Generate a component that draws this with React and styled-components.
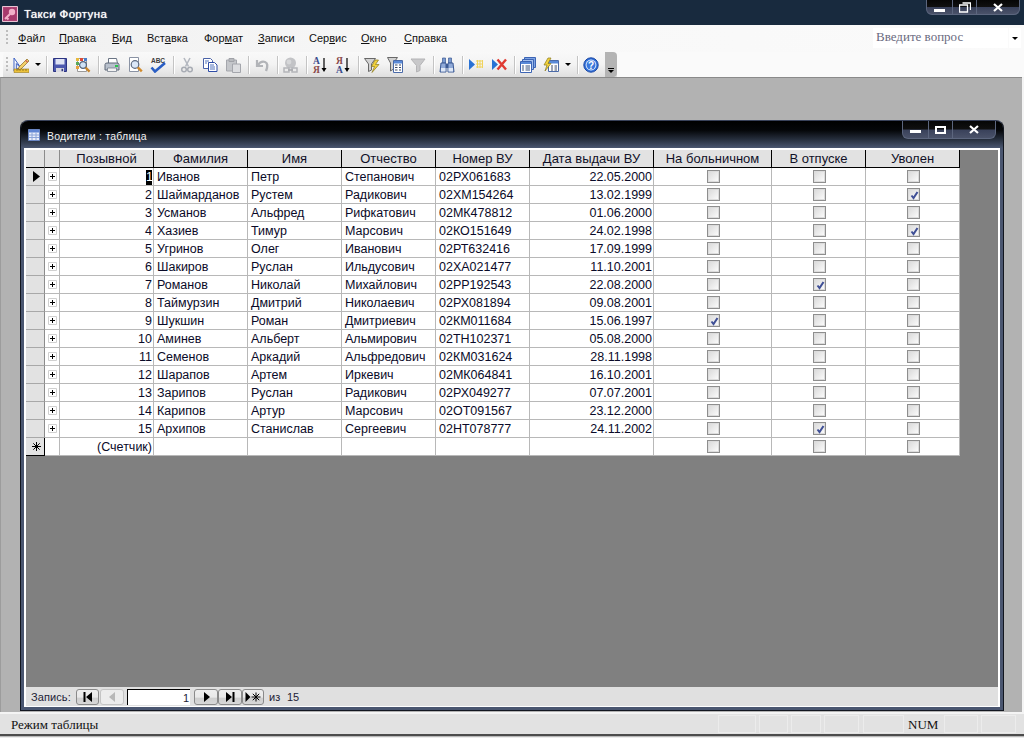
import React from "react";
import styled, { createGlobalStyle } from "styled-components";

const Global = createGlobalStyle`
  html, body { margin: 0; padding: 0; background: #b2b2b2; overflow: hidden; }
  * { box-sizing: border-box; }
  #root { width: 1024px; height: 738px; }
`;
const sans = `"Liberation Sans", Arial, sans-serif`;
const serif = `"Liberation Serif", "Times New Roman", serif`;

const Page = styled.div`
  width: 1024px; height: 738px; display: flex; flex-direction: column;
  font-family: ${sans}; color: #000; background: #f4f4f4;
`;
const TitleBar = styled.header`
  height: 25px; flex: none; background: #182a3e; display: flex; align-items: flex-start;
  padding: 0 4px 0 2px;
`;
const AppIcon = styled.svg`width: 16px; height: 16px; margin-top: 6px; flex: none;`;
const AppTitle = styled.div`
  margin: 7px 0 0 6px; color: #fff; font-size: 11.5px; line-height: 15px; font-weight: 400;
  letter-spacing: .35px; text-shadow: 0 0 1px #fff;
`;
const Controls = styled.div`
  margin-left: auto; display: flex; height: ${p => p.$h}px; margin-right: ${p => p.$mr}px;
  border: 1px solid #5c667e; border-top: 0; border-radius: 0 0 6px 6px; overflow: hidden;
  background: linear-gradient(#060606 0, #101010 48%, #39415a 52%, #4a5269 100%);
`;
const Ctl = styled.div`
  width: ${p => p.$w}px; display: flex; align-items: center; justify-content: center;
  & + & { border-left: 1px solid #5c667e; }
  svg { display: block; margin-top: ${p => p.$dy || 0}px; }
`;
const MenuBar = styled.nav`
  height: 27px; flex: none; display: flex; align-items: center; padding: 0 0 2px 18px; position: relative;
  background: linear-gradient(90deg, #f0f0f0 0, #f8f8f8 45%, #fafafa 100%);
`;
const Grip = styled.i`
  position: absolute; left: 6px; top: ${p => p.$t}px; width: 2px; height: 15px;
  background: repeating-linear-gradient(#bdbdbd 0 2px, transparent 2px 4px);
`;
const MenuItem = styled.span`
  width: ${p => p.$w}px; flex: none; font-size: 11px; line-height: 14px; color: #111;
  u { text-underline-offset: 1px; }
`;
const AskBox = styled.div`
  position: absolute; left: 873px; top: 3px; width: 135px; height: 20px; background: #fff;
  font: 13px/17px ${serif}; color: #6a6a80; padding-left: 3px;
`;
const AskArrow = styled.div`
  position: absolute; left: 1009px; top: 3px; width: 12px; height: 20px; background: #fff;
  display: flex; align-items: center; justify-content: center;
  &::after { content: ""; border: 3px solid transparent; border-top: 3px solid #000; margin-top: 3px; }
`;
const ToolRow = styled.div`
  height: 25px; flex: none; display: flex; background: #fafafa; padding-left: 3px;
`;
const ToolBar = styled.div`
  position: relative; width: 614px; display: flex; align-items: center; padding-left: 7px;
  border-radius: 4px 4px 0 0; background: linear-gradient(#f9f9f9, #f3f3f3 50%, #dfdfdf);
`;
const ToolBtn = styled.div`
  width: 23px; height: 22px; flex: none; padding-left: 3px; display: flex; align-items: center;
  svg { width: 16px; height: 16px; display: block; }
`;
const ToolArrow = styled.div`
  width: ${p => p.$w}px; flex: none; padding-left: 2px; display: flex; align-items: center;
  &::after { content: ""; border: 3px solid transparent; border-top: 3px solid #000; margin-top: 3px; }
`;
const ToolSep = styled.div`
  width: 6px; height: 18px; flex: none; position: relative;
  &::after { content: ""; position: absolute; left: 3px; top: 0; bottom: 0; width: 1px; background: #c4c4c4; box-shadow: 1px 0 #fff; }
`;
const Chevron = styled.div`
  position: absolute; right: 0; top: 0; bottom: 0; width: 12px; background: #b4b4b4; border-radius: 0 4px 4px 0;
  display: flex; flex-direction: column; align-items: center; justify-content: flex-end; padding-bottom: 4px;
  &::before { content: ""; width: 6px; height: 1px; background: #000; margin-bottom: 1px; }
  &::after { content: ""; border: 3px solid transparent; border-top: 3px solid #000; height: 0; margin-bottom: -3px; }
`;
const Workspace = styled.main`
  flex: 1; min-height: 0; background: #b2b2b2; margin-right: 2px;
  border-top: 1px solid #8a8a8a; border-left: 1px solid #9c9c9c;
  padding: 42px 0 0 19px;
`;
const DocWindow = styled.section`
  width: 984px; height: 591px; display: flex; flex-direction: column;
  background: #4a5670; border: 1px solid #12161f; border-top-color: #39425a; padding: 0 3px 3px;
  border-radius: 8px 8px 0 0;
`;
const DocTitle = styled.div`
  height: 27px; flex: none; display: flex; align-items: flex-start; margin: 0 -3px; padding: 0 7px;
  border-radius: 7px 7px 0 0; background: linear-gradient(#000 0, #05070a 35%, #2a3343 72%, #4a5670 100%);
`;
const DocIcon = styled.svg`width: 12px; height: 12px; margin: 8px 0 0 0; flex: none;`;
const DocName = styled.div`
  margin: 9px 0 0 7px; font-size: 10.5px; line-height: 13px; color: #f2f2f2; letter-spacing: .25px;
`;
const DocBody = styled.div`
  flex: 1; min-height: 0; display: flex; flex-direction: column; background: #808080;
  border: 2px solid #fff; border-bottom-width: 1px;
`;
const GridArea = styled.div`flex: 1; min-height: 0;`;
const cols = "19px 15px 94px 94px 94px 94px 94px 124px 118px 94px 94px";
const Row = styled.div`
  display: grid; grid-template-columns: ${cols}; width: 934px; height: 18px;
  background: #fff; font-size: 12.5px; line-height: 18px; color: #0a0a28;
`;
const HeadCell = styled.div`
  background: #e2e2e2; text-align: center; border-right: 1px solid #000; border-bottom: 1px solid #000;
  color: #111128; white-space: nowrap; overflow: hidden; font-size: 13px; line-height: 17px;
`;
const CornerCell = styled(HeadCell)`border-right-color: #8c8c8c;`;
const Selector = styled.div`
  background: #e2e2e2; border-right: 1px solid ${p => p.$dark ? "#000" : "#8c8c8c"};
  border-bottom: 1px solid ${p => p.$dark ? "#000" : "#a8a8a8"};
  display: flex; align-items: center; justify-content: center; padding-left: 3px;
  svg { display: block; }
`;
const Expander = styled.div`
  border-right: 1px solid #b8b8b8; border-bottom: 1px solid #b8b8b8;
  display: flex; align-items: center; padding-left: 3px;
  svg { display: block; }
`;
const Cell = styled.div`
  border-right: 1px solid #b8b8b8; border-bottom: 1px solid #b8b8b8;
  white-space: nowrap; overflow: hidden;
  text-align: ${p => p.$right ? "right" : "left"}; padding: ${p => p.$right ? "0 1px 0 0" : "0 0 0 3px"};
`;
const Current = styled.span`
  display: inline-block; background: #000; color: #fff; height: 15px; line-height: 15px;
  vertical-align: top; margin-top: 2px; width: 6px; text-align: center;
`;
const CheckCell = styled.div`
  border-right: 1px solid #b8b8b8; border-bottom: 1px solid #b8b8b8;
  display: flex; align-items: center; justify-content: center; padding-left: 2px;
`;
const Box = styled.div`
  width: 13px; height: 13px; border: 1px solid #8e8e8e;
  background: linear-gradient(135deg, #d8d8d8, #f2f2f2 70%, #fff);
  box-shadow: inset 0 0 0 1px #dcdcdc; position: relative;
  svg { position: absolute; left: 1px; top: 1px; display: block; }
`;
const NavBar = styled.div`
  height: 19px; flex: none; background: #e0e0e0; display: flex; align-items: center;
  font-size: 11px; color: #222236; padding-left: 5px;
`;
const NavLabel = styled.span`
  width: ${p => p.$w}px; flex: none; line-height: 14px; letter-spacing: ${p => p.$ls || 0}px;
`;
const NavBtn = styled.div`
  width: ${p => p.$w || 23}px; height: 16px; flex: none; margin-right: ${p => p.$mr || 0}px; border-radius: 3px;
  border: 1px solid ${p => p.$off ? "#c4c4c4" : "#8a8a8a"};
  background: ${p => p.$off ? "#ececec" : "linear-gradient(#eeeeee 0, #e9e9e9 50%, #cfcfcf 60%, #d8d8d8 100%)"};
  display: flex; align-items: center; justify-content: center;
  svg { display: block; }
`;
const NavInput = styled.div`
  width: 63px; height: 16px; flex: none; margin-right: 4px; background: #fff;
  border-top: 1px solid #000; border-left: 1px solid #000; text-align: right; padding-right: 1px;
  font-size: 11px; line-height: 17px;
`;
const StatusBar = styled.footer`
  height: 22px; flex: none; background: #e2e2e2; border-top: 2px solid #f4f4f4;
  position: relative; display: flex; align-items: flex-start; padding-top: 1px;
  font: 13px/18px ${serif}; color: #111;
`;
const StatusEnd = styled.div`
  height: 4px; flex: none; background: linear-gradient(#4c4c4c 0, #4c4c4c 2px, #b9b9b9 2px, #b9b9b9 3px, #ececec 3px);
`;
const Panel = styled.div`
  flex: none; height: 18px; margin-left: ${p => p.$ml}px; width: ${p => p.$w}px;
  border: 1px solid ${p => p.$plain ? "transparent" : "#ececec"}; padding-left: ${p => p.$pl || 0}px;
  white-space: nowrap; line-height: 17px;
`;
const Svg = ({ children, vb = "0 0 16 16", ...r }) => <svg viewBox={vb} {...r}>{children}</svg>;

const Ic = {
  design: <Svg>
    <path d="M1 1v13h9z M3.3 6.5v5.2h5.1z" fill="#fff" fillRule="evenodd" stroke="#3e62c4" strokeWidth="1"/>
    <path d="M1 12h15v3.500H1z" fill="#ecc23c" stroke="#9a7a1c" strokeWidth=".6"/>
    <path d="M4 12v2M7 12v2M10 12v2M13 12v2" stroke="#7a5f10" strokeWidth=".7"/>
    <path d="M6 10l8-8 2 2-8 8-3 1z" fill="#f2cf68" stroke="#8a6a20" strokeWidth=".7"/>
    <path d="M12.600 3.400l2 2" stroke="#c55" strokeWidth="1.300"/>
  </Svg>,
  save: <Svg>
    <path d="M1.500 1.500h13v13h-13z" fill="#4c58ae" stroke="#2c3482" strokeWidth="1"/>
    <path d="M3.500 2h9v5.500h-9z" fill="#dfe3f4"/>
    <path d="M4 11h8v4H4z" fill="#d8d8e0"/><path d="M9.500 11.800h1.600v2.400H9.500z" fill="#30367c"/>
  </Svg>,
  find: <Svg>
    <path d="M2.500 1.500h9v13h-9z" fill="#fff" stroke="#9a9a9a"/>
    <path d="M1 1h3v3H1z" fill="#e8b93a"/><path d="M5 1h3v3H5z" fill="#d84a3a"/><path d="M9 1h3v3H9z" fill="#4a7cc8"/>
    <path d="M1 5h3v3H1z" fill="#58a858"/><path d="M1 9h3v3H1z" fill="#e8a03a"/>
    <circle cx="8" cy="8" r="3.400" fill="#cfe2f6" stroke="#54647c" strokeWidth="1.200"/>
    <path d="M10.600 10.600l4 4" stroke="#c8862c" strokeWidth="2.200"/>
  </Svg>,
  print: <Svg>
    <path d="M4.500 1.500h8l1 5h-9z" fill="#fff" stroke="#6a7484"/>
    <path d="M1 7.500Q1 6 3 6h10q2 0 2 1.500V13H1z" fill="#b8c0cc" stroke="#5e6878"/>
    <path d="M3.500 11h9v3.500h-9z" fill="#f2f2f2" stroke="#687282" strokeWidth=".7"/>
    <path d="M11 8h3v2h-3z" fill="#2cc34e"/>
  </Svg>,
  preview: <Svg>
    <path d="M2.500 .5h9v14h-9z" fill="#fff" stroke="#8a93a4"/>
    <circle cx="8" cy="7.500" r="3.800" fill="#dbe8f8" stroke="#5c6a80" strokeWidth="1.200"/>
    <path d="M10.800 10.400l4 4" stroke="#d08a2c" strokeWidth="2.400"/>
  </Svg>,
  spell: <Svg>
    <text x="8" y="6" textAnchor="middle" fontSize="6.500" fontWeight="700" fontFamily={sans} fill="#3c3c3c">ABC</text>
    <path d="M1.500 10.500l3.500 4L15 6" fill="none" stroke="#2a5ec4" strokeWidth="2.600"/>
  </Svg>,
  cut: <Svg>
    <path d="M5 1l4.500 8.500M11 1L6.500 9.500" stroke="#b4b8c0" strokeWidth="1.600" fill="none"/>
    <circle cx="5" cy="12.500" r="2.300" fill="none" stroke="#a8acb4" strokeWidth="1.500"/>
    <circle cx="11" cy="12.500" r="2.300" fill="none" stroke="#a8acb4" strokeWidth="1.500"/>
  </Svg>,
  copy: <Svg>
    <path d="M1.500 1.500h7l2 2v8h-9z" fill="#fff" stroke="#4a62a8"/>
    <path d="M6.500 5.500h6l2.500 2.500v6.500H6.500z" fill="#fff" stroke="#2e4ca6"/>
    <path d="M3 4h4M3 6h2M8 8h4M8 10h5M8 12h5" stroke="#3f63b6" strokeWidth=".9"/>
  </Svg>,
  paste: <Svg>
    <path d="M1.500 3h10v11h-10z" fill="#c4c6ca" stroke="#a4a6ac"/>
    <path d="M4 1.500h5v3H4z" fill="#b8babe" stroke="#a0a2a8"/>
    <path d="M7.500 7h8v8.500h-8z" fill="#dcdde0" stroke="#a4a6ac"/>
  </Svg>,
  undo: <Svg>
    <path d="M3 3v6h6" fill="none" stroke="#b2b4b8" strokeWidth="2.200"/>
    <path d="M3.500 8.500Q7 3.500 11 5t1 9" fill="none" stroke="#b2b4b8" strokeWidth="2.400"/>
  </Svg>,
  link: <Svg>
    <circle cx="7.500" cy="6" r="5.500" fill="#c2c3c6"/>
    <circle cx="6" cy="5" r="2.400" fill="#d6d7d9"/>
    <path d="M1 11h5v4H1zM9 11h5v4H9z" fill="none" stroke="#b4b5b9" strokeWidth="1.500"/>
    <path d="M5 13h5" stroke="#a8a9ad" strokeWidth="1.600"/>
  </Svg>,
  filter1: <Svg>
    <path d="M.5 1.500h11L7.500 7v6L4.500 14.500V7z" fill="#d2d2d2" stroke="#686868"/>
    <path d="M11 3L7.500 9.500h3L8 15.500 15 7.500h-3.500L14.500 3z" fill="#f2d23c" stroke="#8a7a1c" strokeWidth=".7"/>
  </Svg>,
  filter2: <Svg>
    <path d="M.5 .5h10L6.500 6v6l-3 2V6z" fill="#d2d2d2" stroke="#686868"/>
    <path d="M6.500 3.500h9v12h-9z" fill="#fff" stroke="#4a6aa8"/>
    <path d="M7 4h8v2.500H7z" fill="#5a8ad8"/>
    <path d="M8 8h2.500M8 10.500h2.500M8 13h2.500M12 8h2M12 10.500h2M12 13h2" stroke="#3d4a66" strokeWidth="1.100"/>
  </Svg>,
  filter3: <Svg>
    <path d="M1 2h14L10 8.500v5L6.500 15V8.500z" fill="#c8c8ca" stroke="#b4b4b6"/>
  </Svg>,
  binoc: <Svg>
    <path d="M3.500 1h3v5h-3zM9.500 1h3v5h-3z" fill="#7a9ad0" stroke="#3c5a94" strokeWidth=".7"/>
    <path d="M2 6h5v9H1zM9 6h5l1 9H9z" fill="#90aad8" stroke="#3c5a94"/>
    <path d="M7 7h2v4H7z" fill="#3c5a94"/>
    <path d="M2 11h4.500v3.500H2zM9.500 11H14v3.500H9.500z" fill="#dfe8f6"/>
  </Svg>,
  newRec: <Svg>
    <path d="M1 2l6 5.500-6 5.500z" fill="#2a72d4"/>
    <path d="M8 4h7M8 7h7M8 10h7M9.500 3v8M12 3v8M14.500 3v8" stroke="#f0d35c" strokeWidth="1"/>
  </Svg>,
  delRec: <Svg>
    <path d="M1 2l6 5.500-6 5.500z" fill="#2a72d4"/>
    <path d="M6.500 2.500l8.500 10M15 2.500l-8.500 10" stroke="#e03a32" strokeWidth="2.400"/>
  </Svg>,
  dbWin: <Svg>
    <path d="M4.500 .5h11v10h-11z" fill="#7ea4e4" stroke="#3c64b4"/>
    <path d="M2.500 2.500h11v10h-11z" fill="#a4c0ee" stroke="#3c64b4"/>
    <path d="M.5 4.500h11v11H.5z" fill="#fff" stroke="#3c64b4"/>
    <path d="M1 5h10v2H1z" fill="#5a8ad8"/>
    <path d="M2 9h2M2 11h2M2 13h2M5.500 9H10M5.500 11H10M5.500 13H10" stroke="#36507c"/>
  </Svg>,
  newObj: <Svg>
    <path d="M5.500 3.500h10v11h-10z" fill="#fff" stroke="#4a6aa8"/>
    <path d="M6 4h9v2.500H6z" fill="#5a8ad8"/>
    <path d="M8 9h2M8 11h2M8 13h2M11.500 9H14M11.500 11H14M11.500 13H14" stroke="#3d4a66"/>
    <path d="M5 1L1 8h3L2 14l6-7.500H5L8 1z" fill="#f2d23c" stroke="#8a7a1c" strokeWidth=".7"/>
  </Svg>,
  help: <Svg>
    <circle cx="8" cy="8" r="7.200" fill="#2e6ed8" stroke="#1c48a4"/>
    <circle cx="8" cy="8" r="5.400" fill="#e8f0fc"/>
    <circle cx="8" cy="8" r="4.500" fill="#3a78dc"/>
    <text x="8" y="11.500" textAnchor="middle" fontSize="10" fontWeight="700" fontFamily={sans} fill="#fff">?</text>
  </Svg>,
};
const SortIcon = ({ down }) => <Svg>
  <text x="4.500" y="7" textAnchor="middle" fontSize="9.500" fontWeight="700" fontFamily={serif} fill={down ? "#8a4a4a" : "#3a4a8a"}>{down ? "Я" : "А"}</text>
  <text x="4.500" y="15.500" textAnchor="middle" fontSize="9.500" fontWeight="700" fontFamily={serif} fill={down ? "#3a4a8a" : "#8a4a4a"}>{down ? "А" : "Я"}</text>
  <path d="M12 1v11" stroke="#000" strokeWidth="1.200"/><path d="M9.500 11h5L12 15z" fill="#000"/>
</Svg>;

const menu = [
  [["", "Ф", "айл"], 41], [["", "П", "равка"], 53], [["", "В", "ид"], 35], [["Вст", "а", "вка"], 57],
  [["Фор", "м", "ат"], 54], [["", "З", "аписи"], 51], [["Сер", "в", "ис"], 52], [["", "О", "кно"], 43], [["", "С", "правка"], 60],
];
const columns = ["Позывной", "Фамилия", "Имя", "Отчество", "Номер ВУ", "Дата выдачи ВУ", "На больничном", "В отпуске", "Уволен"];
const rows = [
  [1, "Иванов", "Петр", "Степанович", "02РХ061683", "22.05.2000", 0, 0, 0],
  [2, "Шаймарданов", "Рустем", "Радикович", "02ХМ154264", "13.02.1999", 0, 0, 1],
  [3, "Усманов", "Альфред", "Рифкатович", "02МК478812", "01.06.2000", 0, 0, 0],
  [4, "Хазиев", "Тимур", "Марсович", "02КО151649", "24.02.1998", 0, 0, 1],
  [5, "Угринов", "Олег", "Иванович", "02РТ632416", "17.09.1999", 0, 0, 0],
  [6, "Шакиров", "Руслан", "Ильдусович", "02ХА021477", "11.10.2001", 0, 0, 0],
  [7, "Романов", "Николай", "Михайлович", "02РР192543", "22.08.2000", 0, 1, 0],
  [8, "Таймурзин", "Дмитрий", "Николаевич", "02РХ081894", "09.08.2001", 0, 0, 0],
  [9, "Шукшин", "Роман", "Дмитриевич", "02КМ011684", "15.06.1997", 1, 0, 0],
  [10, "Аминев", "Альберт", "Альмирович", "02ТН102371", "05.08.2000", 0, 0, 0],
  [11, "Семенов", "Аркадий", "Альфредович", "02КМ031624", "28.11.1998", 0, 0, 0],
  [12, "Шарапов", "Артем", "Иркевич", "02МК064841", "16.10.2001", 0, 0, 0],
  [13, "Зарипов", "Руслан", "Радикович", "02РХ049277", "07.07.2001", 0, 0, 0],
  [14, "Карипов", "Артур", "Марсович", "02ОТ091567", "23.12.2000", 0, 0, 0],
  [15, "Архипов", "Станислав", "Сергеевич", "02НТ078777", "24.11.2002", 0, 1, 0],
];
const Check = ({ on }) => <Box>{on ? <svg width="11" height="11" viewBox="0 0 11 11"><path d="M2.500 5.500l2 2.500 4-6" fill="none" stroke="#3f4f96" strokeWidth="2"/></svg> : null}</Box>;
const Plus = () => <svg width="9" height="9" viewBox="0 0 9 9"><path d="M.5.500h8v8h-8z" fill="#fff" stroke="#d0d0d0"/><path d="M4.500 2v5M2 4.500h5" stroke="#000"/></svg>;
const Star = () => <svg width="11" height="11" viewBox="0 0 11 11"><path d="M5.500 1v9M1 5.500h9M2.300 2.300l6.400 6.400M8.700 2.300l-6.400 6.400" stroke="#000" strokeWidth="1"/></svg>;
const Tri = ({ children }) => <svg width="13" height="10" viewBox="0 0 13 10">{children}</svg>;

const panels = [[18, 38], [3, 29], [3, 30], [3, 35], [4, 41]];

export default function App() {
  return (
    <Page>
      <Global />
      <TitleBar>
        <AppIcon viewBox="0 0 16 16">
          <path d="M.5.500h15v15H.5z" fill="#b84a7c" stroke="#e8c4d4"/>
          <path d="M1.500 1.500h13v13h-13z" fill="#a63a6c"/>
          <circle cx="10" cy="6" r="3.200" fill="#f0b0c8"/>
          <path d="M8 8L3 13M4.500 11.500l2 2" stroke="#f0b0c8" strokeWidth="2"/>
        </AppIcon>
        <AppTitle>Такси Фортуна</AppTitle>
        <Controls $h={15} $mr={0}>
          <Ctl $w={25}><svg width="11" height="5" viewBox="0 0 11 5" style={{ marginTop: 6 }}><path d="M0 1h11v3H0z" fill="#fff"/></svg></Ctl>
          <Ctl $w={24}><svg width="12" height="11" viewBox="0 0 12 11"><path d="M3.500 1h8v7M.5 3h8v7h-8z" fill="none" stroke="#fff" strokeWidth="1.300"/></svg></Ctl>
          <Ctl $w={43}><svg width="10" height="9" viewBox="0 0 10 9"><path d="M1 1l8 7M9 1L1 8" stroke="#fff" strokeWidth="2.200"/></svg></Ctl>
        </Controls>
      </TitleBar>
      <MenuBar>
        <Grip $t={5} />
        {menu.map(([[a, k, b], w]) => <MenuItem key={a + k + b} $w={w}>{a}<u>{k}</u>{b}</MenuItem>)}
        <AskBox>Введите вопрос</AskBox>
        <AskArrow />
      </MenuBar>
      <ToolRow>
        <ToolBar>
          <Grip $t={5} style={{ left: 3 }} />
          <ToolBtn>{Ic.design}</ToolBtn><ToolArrow $w={10} /><ToolSep />
          <ToolBtn>{Ic.save}</ToolBtn><ToolBtn>{Ic.find}</ToolBtn><ToolSep />
          <ToolBtn>{Ic.print}</ToolBtn><ToolBtn>{Ic.preview}</ToolBtn><ToolBtn>{Ic.spell}</ToolBtn><ToolSep />
          <ToolBtn>{Ic.cut}</ToolBtn><ToolBtn>{Ic.copy}</ToolBtn><ToolBtn>{Ic.paste}</ToolBtn><ToolSep />
          <ToolBtn>{Ic.undo}</ToolBtn><ToolSep />
          <ToolBtn>{Ic.link}</ToolBtn><ToolSep />
          <ToolBtn><SortIcon /></ToolBtn><ToolBtn><SortIcon down /></ToolBtn><ToolSep />
          <ToolBtn>{Ic.filter1}</ToolBtn><ToolBtn>{Ic.filter2}</ToolBtn><ToolBtn>{Ic.filter3}</ToolBtn><ToolSep />
          <ToolBtn>{Ic.binoc}</ToolBtn><ToolSep />
          <ToolBtn>{Ic.newRec}</ToolBtn><ToolBtn>{Ic.delRec}</ToolBtn><ToolSep />
          <ToolBtn>{Ic.dbWin}</ToolBtn><ToolBtn>{Ic.newObj}</ToolBtn><ToolArrow $w={11} /><ToolSep />
          <ToolBtn>{Ic.help}</ToolBtn>
          <Chevron />
        </ToolBar>
      </ToolRow>
      <Workspace>
        <DocWindow>
          <DocTitle>
            <DocIcon viewBox="0 0 12 12">
              <path d="M.5.500h11v11H.5z" fill="#e8eefa" stroke="#6a86c4"/>
              <path d="M1 1h10v2.500H1z" fill="#5f86d4"/>
              <path d="M1 6h10M1 8.500h10M4 3.500V11M8 3.500V11" stroke="#8aa4d8"/>
            </DocIcon>
            <DocName>Водители : таблица</DocName>
            <Controls $h={18} $mr={0}>
              <Ctl $w={25}><svg width="11" height="5" viewBox="0 0 11 5" style={{ marginTop: 4 }}><path d="M0 1h11v3H0z" fill="#fff"/></svg></Ctl>
              <Ctl $w={24}><svg width="11" height="8" viewBox="0 0 11 8"><path d="M1 1h9v6H1z" fill="none" stroke="#fff" strokeWidth="2"/></svg></Ctl>
              <Ctl $w={43}><svg width="10" height="9" viewBox="0 0 10 9"><path d="M1 1l8 7M9 1L1 8" stroke="#fff" strokeWidth="2.200"/></svg></Ctl>
            </Controls>
          </DocTitle>
          <DocBody>
            <GridArea>
              <Row>
                <CornerCell /><CornerCell />
                {columns.map(c => <HeadCell key={c}>{c}</HeadCell>)}
              </Row>
              {rows.map((r, i) => (
                <Row key={r[0]}>
                  <Selector>{i === 0 ? <svg width="7" height="11" viewBox="0 0 7 11"><path d="M0 0l7 5.500L0 11z" fill="#000"/></svg> : null}</Selector>
                  <Expander><Plus /></Expander>
                  <Cell $right>{i === 0 ? <Current>1</Current> : r[0]}</Cell>
                  <Cell>{r[1]}</Cell><Cell>{r[2]}</Cell><Cell>{r[3]}</Cell><Cell>{r[4]}</Cell>
                  <Cell $right>{r[5]}</Cell>
                  <CheckCell><Check on={r[6]} /></CheckCell>
                  <CheckCell><Check on={r[7]} /></CheckCell>
                  <CheckCell><Check on={r[8]} /></CheckCell>
                </Row>
              ))}
              <Row>
                <Selector $dark><Star /></Selector>
                <Expander />
                <Cell $right>(Счетчик)</Cell>
                <Cell /><Cell /><Cell /><Cell /><Cell />
                <CheckCell><Check /></CheckCell><CheckCell><Check /></CheckCell><CheckCell><Check /></CheckCell>
              </Row>
            </GridArea>
            <NavBar>
              <NavLabel $w={45} $ls={.1}>Запись:</NavLabel>
              <NavBtn $mr={1}><Tri><path d="M2.500 0h2v10h-2zM11 0v10L5 5z" fill="#000"/></Tri></NavBtn>
              <NavBtn $off $w={24} $mr={3}><Tri><path d="M9 0v10L3 5z" fill="#b8b8b8"/></Tri></NavBtn>
              <NavInput>1</NavInput>
              <NavBtn $w={24}><Tri><path d="M4 0v10l6-5z" fill="#000"/></Tri></NavBtn>
              <NavBtn $w={24}><Tri><path d="M2 0v10l6-5zM8.500 0h2v10h-2z" fill="#000"/></Tri></NavBtn>
              <NavBtn $w={22} $mr={5}><svg width="17" height="10" viewBox="0 0 17 10"><path d="M.5 0v10l5-5z" fill="#000"/><path d="M11 .5v9M6.500 5h9M7.800 1.800l6.400 6.400M14.200 1.800l-6.400 6.400" stroke="#000"/></svg></NavBtn>
              <NavLabel $w={18}>из</NavLabel>
              <NavLabel $w={20}>15</NavLabel>
            </NavBar>
          </DocBody>
        </DocWindow>
      </Workspace>
      <StatusBar>
        <Panel $plain $ml={10} $w={690}>Режим таблицы</Panel>
        {panels.map(([m, w], i) => <Panel key={i} $ml={m} $w={w} />)}
        <Panel $plain $ml={3} $w={34}>NUM</Panel>
        <Panel $ml={3} $w={34} />
        <Panel $ml={3} $w={35} />
      </StatusBar>
      <StatusEnd />
    </Page>
  );
}
